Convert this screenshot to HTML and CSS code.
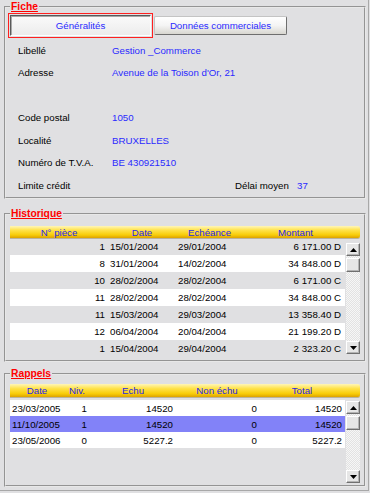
FILE: index.html
```html
<!DOCTYPE html>
<html lang="fr">
<head>
    <meta charset="UTF-8">
    <meta name="viewport" content="width=device-width, initial-scale=1.0">
    <title>Fiche client</title>
    <link rel="stylesheet" href="styles.css">
</head>
<body>
<div class="window">

    <!-- Fiche -->
    <fieldset class="group fiche">
        <legend>Fiche</legend>
        <div class="tabs">
            <div class="tab-focus"><button class="tab active">Généralités</button></div>
            <button class="tab">Données commerciales</button>
        </div>
        <div class="fields">
            <span class="label">Libellé</span><span class="value wide">Gestion _Commerce</span>
            <span class="label">Adresse</span><span class="value wide">Avenue de la Toison d'Or, 21</span>
            <span class="label"></span><span class="value wide"></span>
            <span class="label">Code postal</span><span class="value wide">1050</span>
            <span class="label">Localité</span><span class="value wide">BRUXELLES</span>
            <span class="label">Numéro de T.V.A.</span><span class="value wide">BE 430921510</span>
            <span class="label">Limite crédit</span><span class="value"></span>
            <span class="label">Délai moyen</span><span class="value">37</span>
        </div>
    </fieldset>

    <!-- Historique -->
    <fieldset class="group historique">
        <legend>Historique</legend>
        <div class="grid-head hist-cols">
            <span>N° pièce</span><span>Date</span><span>Echéance</span><span>Montant</span><span></span>
        </div>
        <div class="grid-body hist-body">
            <div class="rows">
                <div class="row hist-cols"><span class="num">1</span><span>15/01/2004</span><span>29/01/2004</span><span class="num">6 171.00 D</span></div>
                <div class="row white hist-cols"><span class="num">8</span><span>31/01/2004</span><span>14/02/2004</span><span class="num">34 848.00 D</span></div>
                <div class="row hist-cols"><span class="num">10</span><span>28/02/2004</span><span>28/02/2004</span><span class="num">6 171.00 C</span></div>
                <div class="row white hist-cols"><span class="num">11</span><span>28/02/2004</span><span>28/02/2004</span><span class="num">34 848.00 C</span></div>
                <div class="row hist-cols"><span class="num">11</span><span>15/03/2004</span><span>29/03/2004</span><span class="num">13 358.40 D</span></div>
                <div class="row white hist-cols"><span class="num">12</span><span>06/04/2004</span><span>20/04/2004</span><span class="num">21 199.20 D</span></div>
                <div class="row hist-cols"><span class="num">1</span><span>15/04/2004</span><span>29/04/2004</span><span class="num">2 323.20 C</span></div>
            </div>
            <div class="scrollbar hist-scroll">
                <span class="sb-btn"><svg width="7" height="4" viewBox="0 0 7 4"><path d="M0 4h7L3.5 0z"/></svg></span>
                <span class="sb-thumb"></span>
                <span class="sb-track"></span>
                <span class="sb-btn"><svg width="7" height="4" viewBox="0 0 7 4"><path d="M0 0h7L3.5 4z"/></svg></span>
            </div>
        </div>
    </fieldset>

    <!-- Rappels -->
    <fieldset class="group rappels">
        <legend>Rappels</legend>
        <div class="grid-head rap-cols">
            <span>Date</span><span>Niv.</span><span>Echu</span><span>Non échu</span><span>Total</span><span></span>
        </div>
        <div class="grid-body rap-body">
            <div class="rows">
                <div class="row white rap-cols"><span>23/03/2005</span><span class="num">1</span><span class="num">14520</span><span class="num">0</span><span class="num">14520</span></div>
                <div class="row selected rap-cols"><span>11/10/2005</span><span class="num">1</span><span class="num">14520</span><span class="num">0</span><span class="num">14520</span></div>
                <div class="row white rap-cols"><span>23/05/2006</span><span class="num">0</span><span class="num">5227.2</span><span class="num">0</span><span class="num">5227.2</span></div>
            </div>
            <div class="scrollbar rap-scroll">
                <span class="sb-btn"><svg width="7" height="4" viewBox="0 0 7 4"><path d="M0 4h7L3.5 0z"/></svg></span>
                <span class="sb-thumb"></span>
                <span class="sb-track"></span>
                <span class="sb-btn"><svg width="7" height="4" viewBox="0 0 7 4"><path d="M0 0h7L3.5 4z"/></svg></span>
            </div>
        </div>
    </fieldset>

</div>
</body>
</html>
```

FILE: styles.css
```css
/* Base */
body {
    margin: 0;
    background-color: #e0e0e2;
    color: #000;
    font-family: "Liberation Sans", Arial, sans-serif;
    font-size: 9.7px;
}

.window {
    width: 368px;
    height: 490px;
    border-right: 1px solid #a8a8a8;
    border-bottom: 1px solid #a8a8a8;
}

/* Group boxes */
.group {
    margin: 0 2px 0 4px;
    border: 2px groove #e8e8e8;
    min-inline-size: 0;
}

.group legend {
    padding: 0 1px;
    height: 13px;
    line-height: 13px;
    color: #ff0000;
    font-size: 10.3px;
    font-weight: bold;
    text-decoration: underline;
}

/* Fiche */
.fiche {
    padding: 0 2px 0.5px 2px;
}

.fiche legend {
    margin-left: 2px;
}

.tabs {
    display: flex;
    align-items: flex-start;
    height: 25px;
}

.tab-focus {
    border: 1px solid #ff2020;
    padding: 1px;
}

.tab {
    font-family: inherit;
    font-size: 9.7px;
    color: #2a2aff;
    padding: 0;
    margin: 0;
}

.tab.active {
    display: block;
    width: 141px;
    height: 21px;
    background: linear-gradient(#fafafa, #ececec);
    border: 1px solid;
    border-color: #5a5a5a #ffffff #ffffff #5a5a5a;
    box-shadow: inset 1px 1px 0 #a8a8a8;
}

.tab:not(.active) {
    width: 133px;
    height: 19px;
    margin: 3px 0 0 1px;
    background: linear-gradient(#ffffff, #f4f4f4 50%, #d8d6d0);
    border: 1px solid;
    border-color: #c4c4c4 #6e6e6e #6e6e6e #c4c4c4;
    border-radius: 2px;
}

.fields {
    display: grid;
    grid-template-columns: 94px 123px 62px 1fr;
    grid-auto-rows: 22.5px;
    align-items: center;
    margin-top: 1px;
    padding-left: 10px;
}

.value {
    color: #2a2aff;
}

.value.wide {
    grid-column: span 3;
}

/* Tables */
.historique {
    margin-top: 8px;
    padding: 6px 4px 3px 4px;
}

.rappels {
    margin-top: 5px;
    padding: 4px 4px 0 4px;
}

.grid-head {
    display: grid;
    align-items: center;
    text-align: center;
    color: #2626e8;
    background: linear-gradient(#fff6b8 0%, #ffe24a 35%, #f8cc08 75%, #dca200 100%);
    border-radius: 0 2px 2px 0;
    box-shadow: 0 1px 0 #b9b3a0;
}

.historique .grid-head {
    height: 12px;
}

.rappels .grid-head {
    height: 13px;
}

.hist-cols {
    grid-template-columns: 98px 68px 67px 105px 12px;
}

.rap-cols {
    grid-template-columns: 54px 26px 86px 82px 88px 14px;
}

.grid-body {
    display: flex;
}

.rows {
    width: 335px;
}

.row {
    display: grid;
    align-items: center;
    height: 17px;
    white-space: nowrap;
}

.row span {
    padding: 0 3px 0 2px;
}

.row .num {
    text-align: right;
}

.row.white {
    background-color: #ffffff;
}

.row.selected {
    background-color: #8282f8;
}

.hist-cols.row {
    grid-template-columns: 98px 68px 67px 102px;
}

.hist-cols.row .num:last-child {
    padding-right: 4px;
}

.rap-body {
    height: 88px;
}

.rap-body .rows {
    padding-top: 3px;
}

.rap-cols.row {
    height: 16px;
    grid-template-columns: 54px 26px 86px 82px 87px;
}

.rap-cols.row .num:nth-child(4) {
    padding-right: 1px;
}

/* Scrollbars */
.scrollbar {
    display: flex;
    flex-direction: column;
    width: 14px;
    margin-left: 1px;
    background: repeating-conic-gradient(#f6f6f6 0% 25%, #e2e2e2 0% 50%) 0 0 / 2px 2px;
}

.hist-scroll {
    margin-top: 5px;
    height: 111px;
}

.rap-scroll {
    margin-top: 4px;
    height: 82px;
}

.sb-btn, .sb-thumb {
    display: flex;
    align-items: center;
    justify-content: center;
    box-sizing: border-box;
    background-color: #e6e6e6;
    border: 1px solid;
    border-color: #ffffff #707070 #707070 #ffffff;
    box-shadow: inset -1px -1px 0 #b4b4b4;
}

.sb-btn {
    height: 13px;
}

.sb-thumb {
    height: 14px;
    margin-top: 2px;
}

.sb-track {
    flex: 1;
}
```
